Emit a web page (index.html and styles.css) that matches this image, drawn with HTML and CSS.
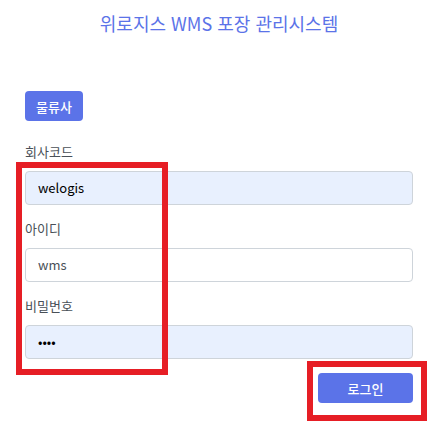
FILE: index.html
```html
<!DOCTYPE html>
<html lang="ko">
<head>
<meta charset="utf-8">
<title>위로지스 WMS 포장 관리시스템</title>
<link rel="stylesheet" href="styles.css">
</head>
<body>
<div class="page">
  <h4 class="title">위로지스 WMS 포장 관리시스템</h4>
  <div class="tabs">
    <button class="btn btn-tab" type="button">물류사</button>
  </div>
  <form class="form">
    <div class="field">
      <label class="label">회사코드</label>
      <input class="input autofill" type="text" value="welogis">
    </div>
    <div class="field">
      <label class="label">아이디</label>
      <input class="input" type="text" value="wms">
    </div>
    <div class="field">
      <label class="label">비밀번호</label>
      <input class="input autofill" type="password" value="1234">
    </div>
    <div class="actions">
      <button class="btn btn-login" type="button">로그인</button>
    </div>
  </form>
  <div class="mark mark-fields"></div>
  <div class="mark mark-login"></div>
</div>
</body>
</html>
```
FILE: styles.css
```css
html, body {
  margin: 0;
  padding: 0;
  background: #ffffff;
  height: 100%;
  overflow: hidden;
}
body {
  font-family: "Noto Sans CJK KR", "Noto Sans", sans-serif;
  font-size: 13px;
  color: #495057;
}
.page {
  position: relative;
  height: 424px;
  padding: 0 24px 0 25px;
}
.title {
  margin: 0;
  padding-top: 12px;
  text-align: center;
  font-size: 18px;
  font-weight: 400;
  line-height: 23px;
  color: #5b73e8;
}
.tabs {
  display: flex;
  margin-top: 56px;
}
.btn {
  font-family: inherit;
  font-size: 13px;
  font-weight: 500;
  color: #ffffff;
  background: #5b73e8;
  border: 0;
  border-radius: 4px;
  height: 30px;
  cursor: pointer;
}
.btn-tab {
  width: 58px;
  padding: 0;
}
.form {
  margin-top: 21px;
}
.field {
  display: flex;
  flex-direction: column;
  margin-bottom: 14.5px;
}
.label {
  font-size: 13px;
  font-weight: 400;
  line-height: 19.5px;
  color: #495057;
  margin-bottom: 9px;
}
.input {
  box-sizing: border-box;
  width: 100%;
  height: 34px;
  margin: 0;
  padding: 0 12px;
  font-family: "Noto Sans CJK KR", "Noto Sans", sans-serif;
  font-size: 13px;
  color: #495057;
  background: #ffffff;
  border: 1px solid #ced4da;
  border-radius: 4px;
  outline: none;
}
.input.autofill {
  background: #e8f0fe;
  color: #000000;
}
.actions {
  display: flex;
  justify-content: flex-end;
  margin-top: 3px;
}
.btn-login {
  width: 95px;
  padding: 0;
}
.mark {
  position: absolute;
  box-sizing: border-box;
  border: 6px solid #e61e25;
  pointer-events: none;
}
.mark-fields {
  left: 16px;
  top: 162px;
  width: 152px;
  height: 213px;
}
.mark-login {
  left: 307px;
  top: 361px;
  width: 120px;
  height: 60px;
}
```
